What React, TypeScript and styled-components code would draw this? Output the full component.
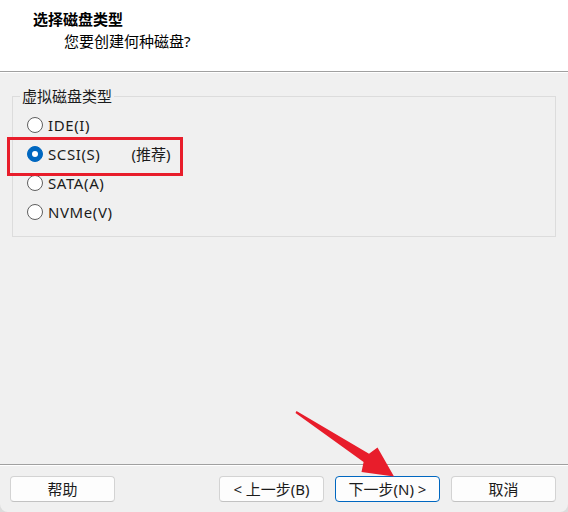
import { FC } from 'react';
import styled, { createGlobalStyle } from 'styled-components';

const GlobalStyle = createGlobalStyle`
  html, body {
    margin: 0;
    padding: 0;
    background: #dcdcdc;
  }
  body {
    font-family: "Noto Sans", "Noto Sans CJK SC", sans-serif;
    color: #1b1b1b;
  }
`;

const Window = styled.div`
  position: relative;
  width: 568px;
  height: 512px;
  display: flex;
  flex-direction: column;
  background: #f0f0f0;
  border-radius: 0 0 8px 8px;
  overflow: hidden;
`;

const Header = styled.div`
  height: 72px;
  box-sizing: border-box;
  padding: 9px 0 0 33px;
  background: #fff;
  border-bottom: 1px solid #a0a0a0;
  box-shadow: 0 1px 0 #fff;
`;

const Title = styled.div`
  font-size: 15px;
  line-height: 20px;
  font-weight: 700;
  color: #000;
`;

const Subtitle = styled.div`
  margin: 1px 0 0 31px;
  font-size: 15px;
  line-height: 22px;
  color: #000;
`;

const Body = styled.div`
  flex: 1;
  padding: 14px 12px 0 12px;
`;

const Group = styled.fieldset`
  margin: 0;
  padding: 4px 0 10px 14px;
  border: 1px solid #dcdcdc;
  min-width: 0;
`;

const Legend = styled.legend`
  margin-left: -7px;
  padding: 0 2px;
  font-size: 15px;
  line-height: 20px;
  color: #1b1b1b;
`;

const Option = styled.label`
  display: flex;
  align-items: center;
  height: 29px;
  font-size: 15px;
  letter-spacing: 0.6px;
  color: #1b1b1b;
`;

const Dot = styled.span<{ checked?: boolean }>`
  width: 16px;
  height: 16px;
  box-sizing: border-box;
  border-radius: 50%;
  margin-right: 5px;
  display: flex;
  align-items: center;
  justify-content: center;
  border: 1px solid ${({ checked }) => (checked ? '#0067c0' : '#5f5f5f')};
  background: ${({ checked }) => (checked ? '#0067c0' : '#fff')};

  &::after {
    content: '';
    display: ${({ checked }) => (checked ? 'block' : 'none')};
    width: 6px;
    height: 6px;
    border-radius: 50%;
    background: #fff;
  }
`;

const Hint = styled.span`
  margin-left: 31px;
  letter-spacing: 0;
`;

const Footer = styled.div`
  display: flex;
  align-items: center;
  padding: 11px 12px 10px 10px;
  border-top: 1px solid #a0a0a0;
  box-shadow: inset 0 1px 0 #fff;
`;

const Spacer = styled.div`
  flex: 1;
`;

const Buttons = styled.div`
  display: flex;
  gap: 11px;
`;

const Button = styled.button<{ primary?: boolean }>`
  width: 105px;
  height: 26px;
  box-sizing: border-box;
  padding: 0;
  border-radius: 4px;
  border: 1px solid ${({ primary }) => (primary ? '#0067c0' : '#d3d3d3')};
  border-bottom-color: ${({ primary }) => (primary ? '#0067c0' : '#c2c2c2')};
  background: #fdfdfd;
  font-family: "Noto Sans", "Noto Sans CJK SC", sans-serif;
  font-size: 15px;
  line-height: 22px;
  color: #1b1b1b;
`;

const Highlight = styled.div`
  position: absolute;
  left: 7px;
  top: 137px;
  width: 176px;
  height: 39px;
  box-sizing: border-box;
  border: 3px solid #e81d2b;
  pointer-events: none;
`;

const ArrowLayer = styled.svg`
  position: absolute;
  left: 0;
  top: 0;
  pointer-events: none;
`;

const options = [
  { label: 'IDE(I)' },
  { label: 'SCSI(S)', hint: '(推荐)', checked: true },
  { label: 'SATA(A)' },
  { label: 'NVMe(V)' },
];

const App: FC = () => {
  return (
    <>
      <GlobalStyle />
      <Window>
        <Header>
          <Title>选择磁盘类型</Title>
          <Subtitle>您要创建何种磁盘?</Subtitle>
        </Header>

        <Body>
          <Group>
            <Legend>虚拟磁盘类型</Legend>
            {options.map((option) => (
              <Option key={option.label}>
                <Dot checked={option.checked} />
                {option.label}
                {option.hint && <Hint>{option.hint}</Hint>}
              </Option>
            ))}
          </Group>
        </Body>

        <Footer>
          <Button>帮助</Button>
          <Spacer />
          <Buttons>
            <Button>&lt; 上一步(B)</Button>
            <Button primary>下一步(N) &gt;</Button>
            <Button>取消</Button>
          </Buttons>
        </Footer>

        {/* annotations */}
        <Highlight />
        <ArrowLayer width="568" height="512" viewBox="0 0 568 512">
          <polygon
            points="296.5,411 369,453.7 377.5,447.5 394,476.5 361.5,472 363.6,462.1 295.5,413"
            fill="#e81d2b"
          />
        </ArrowLayer>
      </Window>
    </>
  );
};

export default App;
